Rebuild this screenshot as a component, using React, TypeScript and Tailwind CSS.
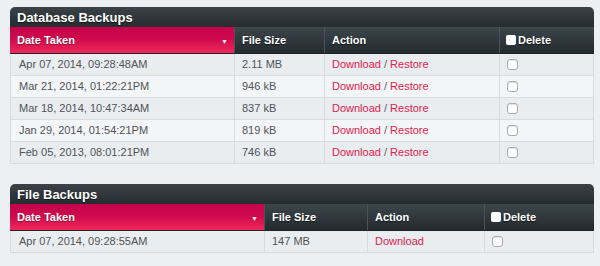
import React from "react";

type Row = { date: string; size: string };

const Box = () => (
  <span className="inline-block w-[11px] h-[11px] rounded-[3px] border border-[#a9adb1] bg-white shadow-[inset_0_1px_1px_rgba(0,0,0,0.12)]" />
);

function Panel({
  title,
  widths,
  rows,
  restore,
}: {
  title: string;
  widths: number[];
  rows: Row[];
  restore: boolean;
}) {
  return (
    <div className="w-[584px] ml-[10px]">
      <div className="h-[20px] rounded-t-[5px] bg-gradient-to-b from-[#3a4247] to-[#262d31] flex items-center pl-[7px]">
        <span className="text-white font-bold text-[13px] leading-none [text-shadow:0_1px_1px_rgba(0,0,0,0.6)]">
          {title}
        </span>
      </div>
      <div className="flex h-[27px] border-b border-[#1e2427]">
        <div
          className="flex items-center justify-between pl-[7px] pr-[6px] bg-gradient-to-b from-[#c4034a] via-[#d00a4d] to-[#f0275a]"
          style={{ width: widths[0] }}
        >
          <span className="text-white font-bold text-[11px] [text-shadow:0_1px_1px_rgba(0,0,0,0.35)]">Date Taken</span>
          <span className="text-white/90 text-[7px] leading-none mt-[3px]">▼</span>
        </div>
        {["File Size", "Action"].map((h, i) => (
          <div
            key={h}
            className="flex items-center pl-[7px] border-l border-[#4a545a] bg-gradient-to-b from-[#3c464b] to-[#242b2f]"
            style={{ width: widths[i + 1] }}
          >
            <span className="text-white font-bold text-[11px] [text-shadow:0_1px_1px_rgba(0,0,0,0.6)]">{h}</span>
          </div>
        ))}
        <div
          className="flex items-center pl-[6px] gap-[2px] border-l border-[#4a545a] bg-gradient-to-b from-[#3c464b] to-[#242b2f]"
          style={{ width: widths[3] }}
        >
          <span className="inline-block w-[10px] h-[10px] rounded-[2px] bg-white" />
          <span className="text-white font-bold text-[11px] [text-shadow:0_1px_1px_rgba(0,0,0,0.6)]">Delete</span>
        </div>
      </div>
      <div className="border-x border-b border-[#d6dbdf]">
        {rows.map((r, idx) => (
          <div
            key={idx}
            className={`flex text-[11px] ${idx > 0 ? "h-[22px] border-t border-[#d6dbdf]" : "h-[21px]"} ${
              idx % 2 === 0 ? "bg-[#eaedf0]" : "bg-[#f4f5f6]"
            }`}
          >
            <div className="flex items-center pl-[8px] text-[#4f5458]" style={{ width: widths[0] - 1 }}>
              {r.date}
            </div>
            <div className="flex items-center pl-[7px] border-l border-[#d6dbdf] text-[#4f5458]" style={{ width: widths[1] }}>
              {r.size}
            </div>
            <div className="flex items-center pl-[7px] border-l border-[#d6dbdf] text-[#e21c4c]" style={{ width: widths[2] }}>
              {restore ? (
                <span>
                  Download <span className="text-[#5a6166]">/</span> Restore
                </span>
              ) : (
                <span>Download</span>
              )}
            </div>
            <div className="flex items-center pl-[7px] border-l border-[#d6dbdf]" style={{ width: widths[3] - 1 }}>
              <Box />
            </div>
          </div>
        ))}
      </div>
    </div>
  );
}

export default function App() {
  return (
    <div
      className="w-[600px] h-[266px] bg-[#edf0f3] pt-[7px]"
      style={{ fontFamily: '"Liberation Sans", Arial, sans-serif' }}
    >
      <Panel
        title="Database Backups"
        widths={[224, 90, 175, 95]}
        restore
        rows={[
          { date: "Apr 07, 2014, 09:28:48AM", size: "2.11 MB" },
          { date: "Mar 21, 2014, 01:22:21PM", size: "946 kB" },
          { date: "Mar 18, 2014, 10:47:34AM", size: "837 kB" },
          { date: "Jan 29, 2014, 01:54:21PM", size: "819 kB" },
          { date: "Feb 05, 2013, 08:01:21PM", size: "746 kB" },
        ]}
      />
      <div className="h-[20px]" />
      <Panel
        title="File Backups"
        widths={[254, 103, 117, 110]}
        restore={false}
        rows={[{ date: "Apr 07, 2014, 09:28:55AM", size: "147 MB" }]}
      />
    </div>
  );
}
